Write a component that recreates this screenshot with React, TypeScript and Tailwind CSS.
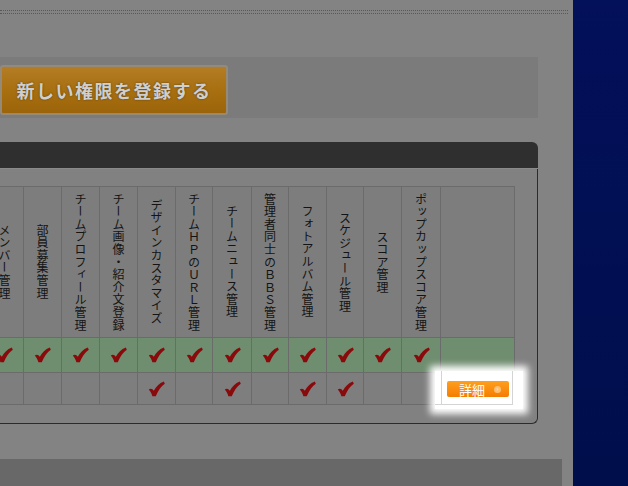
import React from 'react';

const jp = { fontFamily: '"Noto Sans CJK JP", "Noto Sans", sans-serif' };

const columns = [
  { label: 'メンバー管理', w: 'w-[38px]', top: true, bottom: false },
  { label: '部員募集管理', w: 'w-[38px]', top: true, bottom: false },
  { label: 'チームプロフィール管理', w: 'w-[38px]', top: true, bottom: false },
  { label: 'チーム画像・紹介文登録', w: 'w-[38px]', top: true, bottom: false },
  { label: 'デザインカスタマイズ', w: 'w-[38px]', top: true, bottom: true },
  { label: 'チームＨＰのＵＲＬ管理', w: 'w-[37px]', top: true, bottom: false },
  { label: 'チームニュース管理', w: 'w-[39px]', top: true, bottom: true },
  { label: '管理者同士のＢＢＳ管理', w: 'w-[37px]', top: true, bottom: false },
  { label: 'フォトアルバム管理', w: 'w-[38px]', top: true, bottom: true },
  { label: 'スケジュール管理', w: 'w-[37px]', top: true, bottom: true },
  { label: 'スコア管理', w: 'w-[38px]', top: true, bottom: false },
  { label: 'ポップカップスコア管理', w: 'w-[39px]', top: true, bottom: false },
];

// brush style check mark
const Check: React.FC = () => (
  <svg width="17" height="16" viewBox="0 0 17 16">
    <path
      d="M0.8 8.6 C2.6 7 4.6 7.8 5.8 9.8 C8.2 5.6 11.2 2.4 15.8 0.6 L16.8 2.8 C13 5.4 10.2 9.4 7.8 15.2 L4.4 15.2 C3.6 12.4 2.4 10.4 0.8 8.6 Z"
      fill="#8a0a0c"
    />
  </svg>
);

const App: React.FC = () => {
  return (
    <div className="flex w-[628px] h-[486px] overflow-hidden bg-[#818181]" style={jp}>
      <div className="w-[573px] flex flex-col bg-[#838383]">
        <div className="pt-[10px]">
          <div className="w-[568px] h-[4px] border-y border-dotted border-[#585858]"></div>
        </div>

        <div className="mt-[43px] w-[538px] h-[61px] bg-[#7b7b7b] pt-[8px]">
          <button className="w-[228px] h-[50px] rounded-[3px] border-2 border-[#958a78] bg-gradient-to-b from-[#b47c24] via-[#a8700f] to-[#9c640a] flex items-center justify-center">
            <span className="text-[18px] font-bold tracking-[1.5px] text-[#cfcfcf] [text-shadow:0_0_2px_#4a3a20]">
              新しい権限を登録する
            </span>
          </button>
        </div>

        <div className="mt-[24px] w-[538px]">
          <div className="h-[27px] bg-[#2f2f2f] rounded-tr-[6px] border-b border-[#8a8a8a]"></div>
          <div className="border-r border-b border-[#2b2b2b] rounded-br-[6px] pt-[17px] pb-[18px] bg-[#818181]">
            <div className="flex flex-col ml-[-14px] w-[529px]">
              <div className="flex border-t border-[#6b6b6b]">
                {columns.map((c) => (
                  <div
                    key={c.label}
                    className={`${c.w} h-[151px] shrink-0 border-r border-b border-[#6b6b6b] bg-[#7d7d7d] flex items-center justify-center`}
                  >
                    <span className="[writing-mode:vertical-rl] text-[12px] leading-[13px] tracking-[0.6px] text-[#141414]">
                      {c.label}
                    </span>
                  </div>
                ))}
                <div className="w-[74px] h-[151px] shrink-0 border-r border-b border-[#6b6b6b] bg-[#7d7d7d]"></div>
              </div>

              <div className="flex">
                {columns.map((c) => (
                  <div
                    key={c.label}
                    className={`${c.w} h-[35px] shrink-0 border-r border-b border-[#6b6b6b] bg-[#6f8d6f] flex items-center justify-center`}
                  >
                    {c.top && <Check />}
                  </div>
                ))}
                <div className="w-[74px] h-[35px] shrink-0 border-r border-b border-[#6b6b6b] bg-[#6f8d6f]"></div>
              </div>

              <div className="flex">
                {columns.map((c) => (
                  <div
                    key={c.label}
                    className={`${c.w} h-[32px] shrink-0 border-r border-b border-[#6b6b6b] bg-[#7e7e7e] flex items-center justify-center`}
                  >
                    {c.bottom && <Check />}
                  </div>
                ))}
                <div className="relative w-[74px] h-[32px] shrink-0 border-r border-b border-[#6b6b6b] bg-[#7e7e7e]">
                  <div className="absolute -left-[6px] -right-[9px] -top-[2px] -bottom-[5px] z-10 bg-white shadow-[0_0_7px_5px_#ffffff]">
                    <div className="absolute left-[6px] top-0 bottom-[4px] border-l border-[#d4d4d4]"></div>
                    <div className="absolute left-0 right-[10px] bottom-[4px] border-b border-[#d4d4d4]"></div>
                    <div className="absolute right-[10px] top-0 bottom-[4px] border-r border-[#d4d4d4]"></div>
                    <div className="absolute left-[12px] top-[10px] w-[62px] h-[16px] rounded-[2px] bg-gradient-to-b from-[#ff9f1e] to-[#f47d00] flex items-center justify-center gap-[9px] pl-[4px]">
                      <span className="text-[13px] leading-none text-white">詳細</span>
                      <span className="w-[7px] h-[7px] rounded-full bg-[#ffbf6e] flex items-center justify-center text-[6px] leading-none text-white">›</span>
                    </div>
                  </div>
                </div>
              </div>
            </div>
          </div>
        </div>

        <div className="mt-[35px] w-[562px] flex-1 bg-[#686868]"></div>
      </div>
      <div className="flex-1 bg-gradient-to-b from-[#03105a] to-[#000e4c]"></div>
    </div>
  );
};

export default App;
